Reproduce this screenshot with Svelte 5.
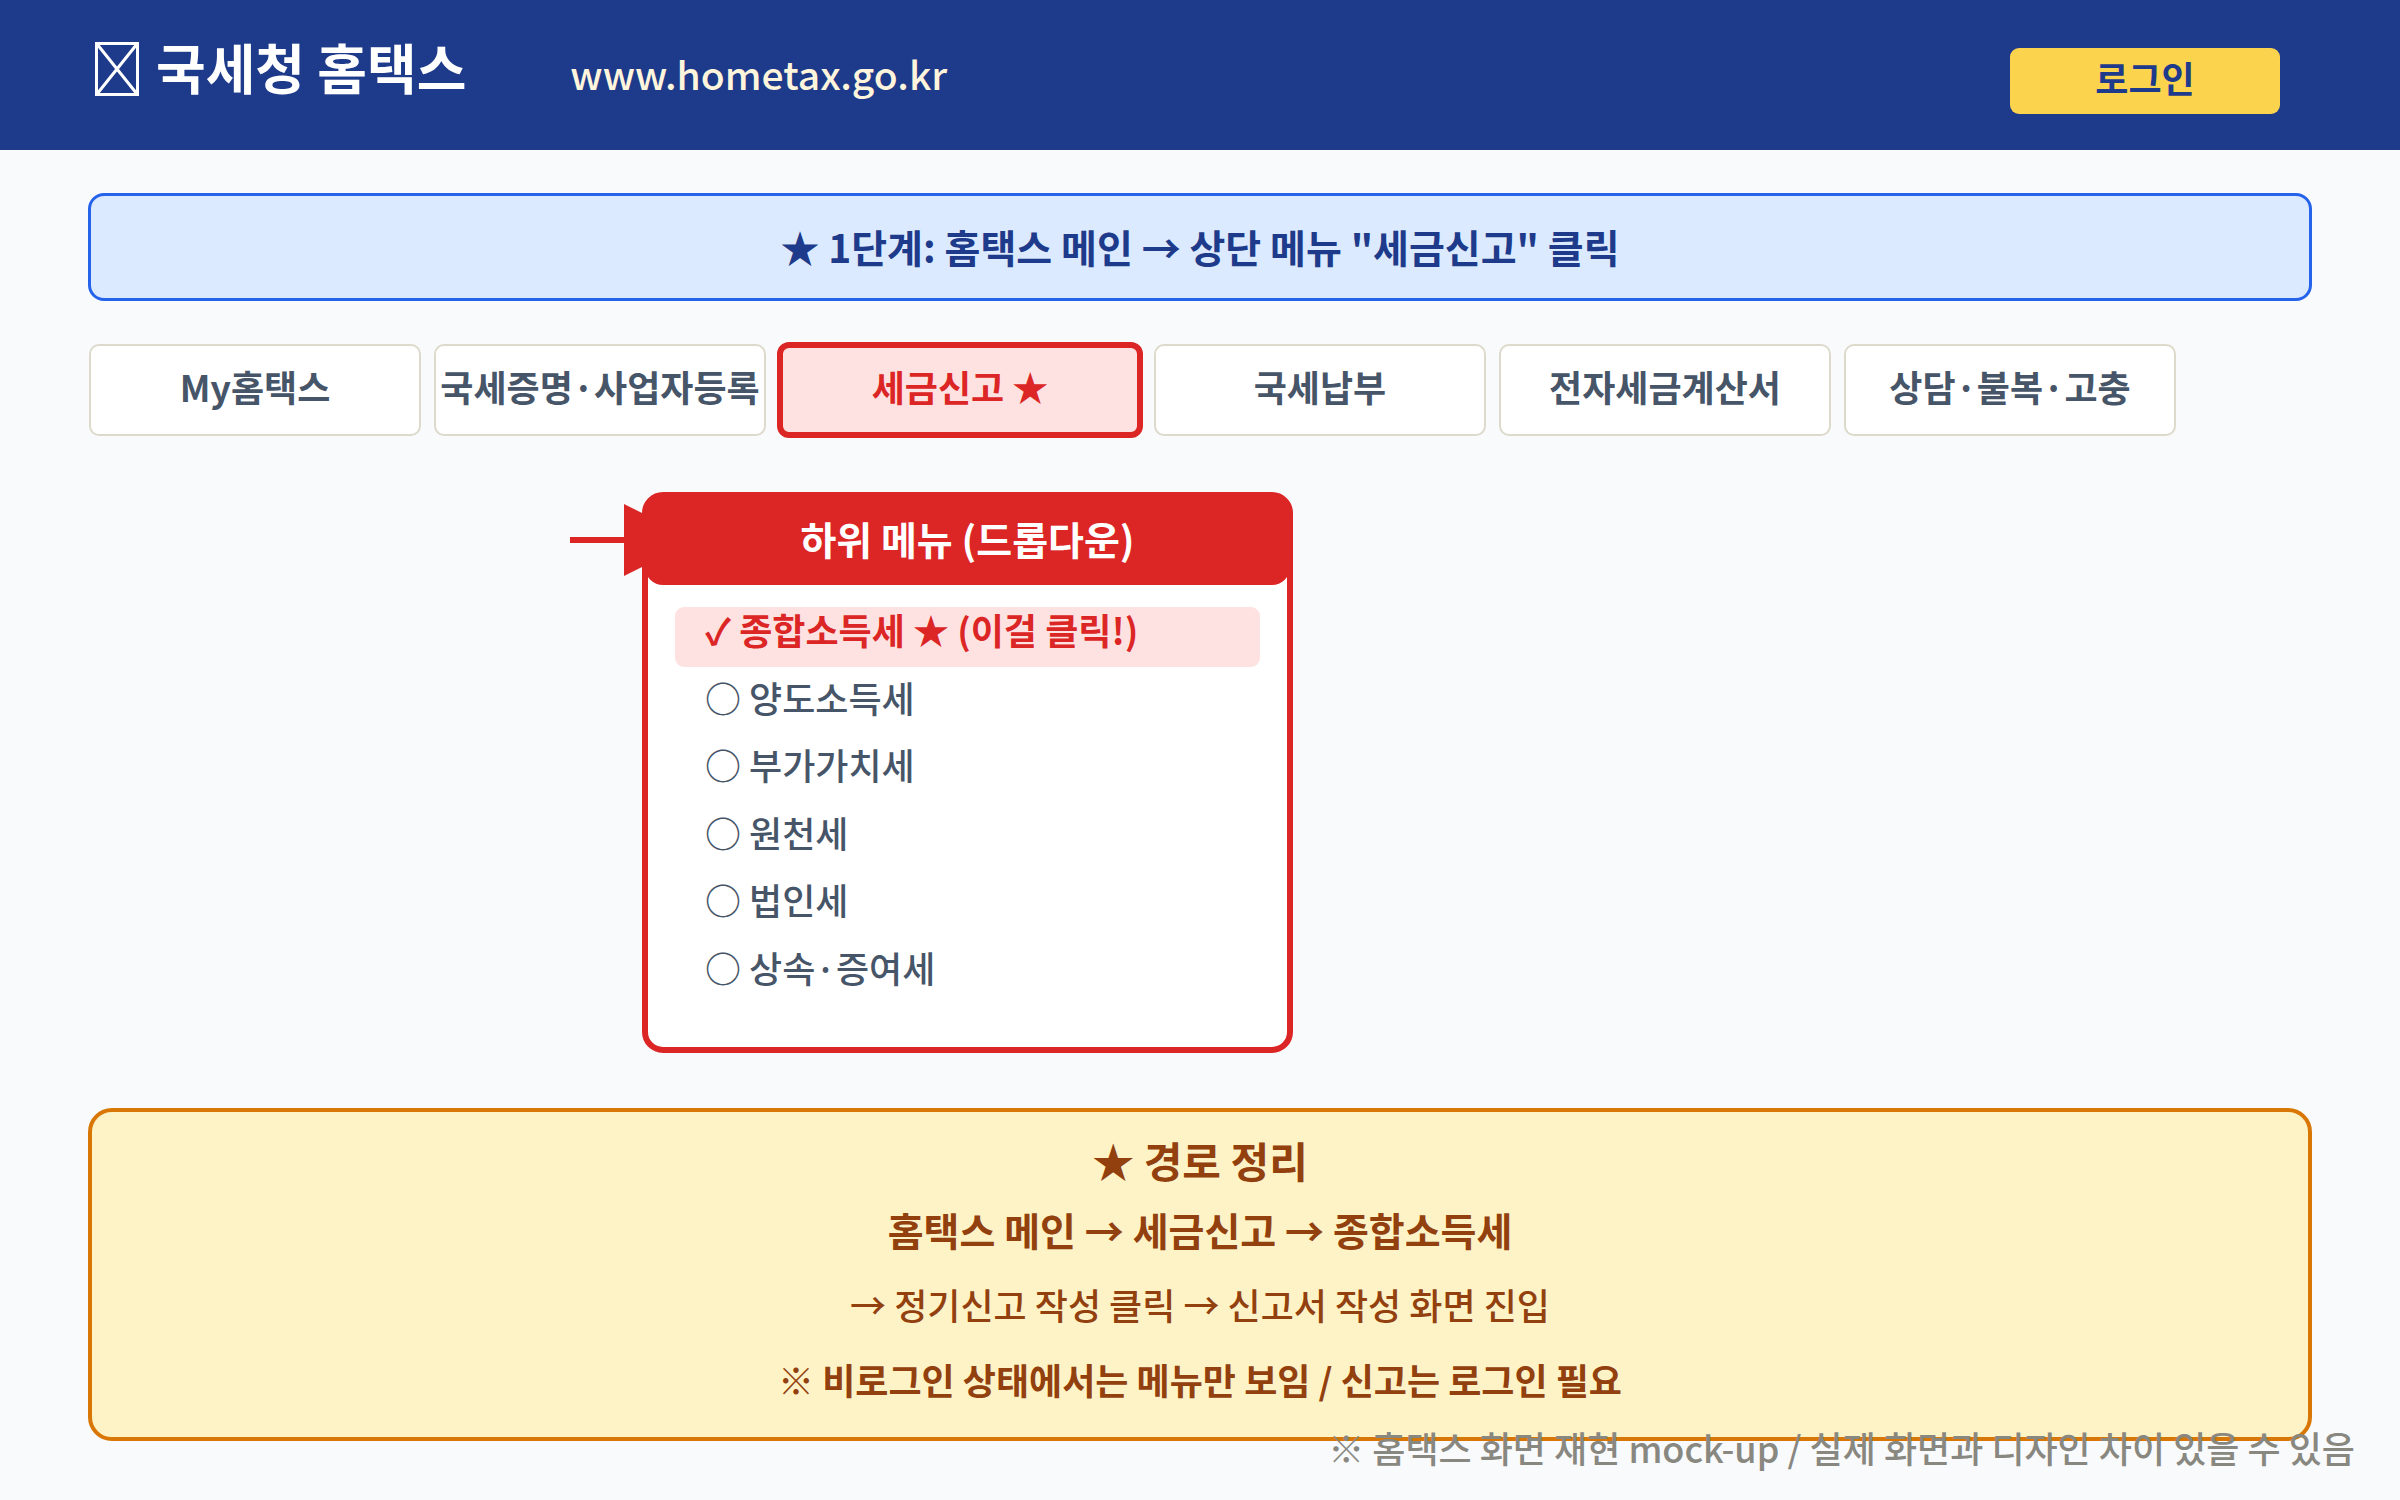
<script lang="ts">
  interface MenuEntry {
    label: string;
    active?: boolean;
  }

  const tabs: MenuEntry[] = [
    { label: "My홈택스" },
    { label: "국세증명·사업자등록" },
    { label: "세금신고 ★", active: true },
    { label: "국세납부" },
    { label: "전자세금계산서" },
    { label: "상담·불복·고충" },
  ];

  const subMenu: MenuEntry[] = [
    { label: "✓ 종합소득세 ★ (이걸 클릭!)", active: true },
    { label: "○ 양도소득세" },
    { label: "○ 부가가치세" },
    { label: "○ 원천세" },
    { label: "○ 법인세" },
    { label: "○ 상속·증여세" },
  ];
</script>

<div class="page">
  <header class="header">
    <div class="brand">
      <h1 class="title">
        <svg class="emblem" viewBox="0 0 44 54" aria-hidden="true">
          <rect x="1.5" y="1.5" width="41" height="51" />
          <path d="M2 2L42 52M42 2L2 52" />
        </svg><span>국세청 홈택스</span>
      </h1>
      <a class="url" href="#home">www.hometax.go.kr</a>
    </div>
    <button class="login" type="button">로그인</button>
  </header>

  <main class="content">
    <h2 class="step">★ 1단계: 홈택스 메인 → 상단 메뉴 "세금신고" 클릭</h2>

    <nav class="tabs">
      {#each tabs as tab}
        <button class="tab" class:active={tab.active} type="button">{tab.label}</button>
      {/each}
    </nav>

    <div class="callout">
      <svg class="arrow" viewBox="0 0 126 72" aria-hidden="true">
        <path d="M0 33H54V0L126 36L54 72V39H0Z" />
      </svg>
      <section class="dropdown">
        <h3 class="dropdown-title">하위 메뉴 (드롭다운)</h3>
        <ul class="items">
          {#each subMenu as item}
            <li>
              <a class="item" class:active={item.active} href="#menu">{item.label}</a>
            </li>
          {/each}
        </ul>
      </section>
    </div>

    <section class="summary">
      <h3>★ 경로 정리</h3>
      <p class="route">홈택스 메인 → 세금신고 → 종합소득세</p>
      <p>→ 정기신고 작성 클릭 → 신고서 작성 화면 진입</p>
      <p class="strong">※ 비로그인 상태에서는 메뉴만 보임 / 신고는 로그인 필요</p>
    </section>
  </main>

  <footer class="note">※ 홈택스 화면 재현 mock-up / 실제 화면과 디자인 차이 있을 수 있음</footer>
</div>

<style>
  :global(body) {
    background: #f9fafc;
  }

  .page {
    position: relative;
    min-height: 100vh;
    box-sizing: border-box;
    padding-bottom: 58px;
    font-family: "Noto Sans CJK KR", sans-serif;
    font-size: 36px;
    font-weight: 500;
    color: #475569;
  }

  h1,
  h2,
  h3,
  p,
  ul {
    margin: 0;
    padding: 0;
  }

  button {
    font: inherit;
    cursor: pointer;
  }

  .header {
    display: flex;
    justify-content: space-between;
    align-items: flex-start;
    box-sizing: border-box;
    height: 150px;
    padding: 27px 120px 0 95px;
    background: #1e3a8a;
  }

  .brand {
    display: flex;
    align-items: baseline;
    gap: 104px;
  }

  .title {
    color: #fff;
    font-size: 54px;
    font-weight: 700;
    line-height: 80px;
    white-space: nowrap;
  }

  .emblem {
    width: 44px;
    height: 54px;
    margin-right: 17px;
    vertical-align: -6px;
    fill: none;
    stroke: #fff;
    stroke-width: 3;
  }

  .url {
    color: #fff5dc;
    font-size: 39px;
    line-height: 56px;
    text-decoration: none;
  }

  .login {
    width: 270px;
    height: 66px;
    margin-top: 21px;
    padding: 0 0 8px;
    border: 0;
    border-radius: 9px;
    background: #fcd34d;
    color: #1e3a8a;
    font-weight: 700;
  }

  .content {
    padding: 43px 88px 0;
  }

  .step {
    padding-bottom: 2px;
    border: 3px solid #2563eb;
    border-radius: 16px;
    background: #dbeafe;
    color: #1e3a8a;
    font-size: 39px;
    font-weight: 700;
    line-height: 100px;
    text-align: center;
  }

  .tabs {
    display: flex;
    align-items: center;
    gap: 13px;
    margin: 41px 1px 0;
  }

  .tab {
    flex: 0 1 332px;
    height: 92px;
    padding: 0 0 8px;
    border: 2px solid #dddacb;
    border-radius: 10px;
    background: #fff;
    color: #475569;
    font-weight: 700;
    white-space: nowrap;
  }

  .tab.active {
    flex-basis: 366px;
    height: 96px;
    margin: 0 -2px;
    border: 6px solid #dc2626;
    border-radius: 12px;
    background: #fee2e2;
    color: #dc2626;
  }

  .callout {
    display: flex;
    align-items: flex-start;
    margin: 54px 0 0 482px;
  }

  .arrow {
    flex: none;
    width: 126px;
    height: 72px;
    margin: 12px -54px 0 0;
    fill: #dc2626;
  }

  .dropdown {
    z-index: 1;
    box-sizing: border-box;
    width: 651px;
    padding-bottom: 42px;
    border: 6px solid #dc2626;
    border-radius: 21px;
    background: #fff;
  }

  .dropdown-title {
    margin: -3px;
    padding-bottom: 4px;
    border-radius: 18px;
    background: #dc2626;
    color: #fff;
    font-size: 39px;
    font-weight: 700;
    line-height: 86px;
    text-align: center;
  }

  .items {
    display: flex;
    flex-direction: column;
    justify-content: space-between;
    height: 398px;
    margin: 25px 27px 0;
    list-style: none;
  }

  .item {
    display: block;
    height: 60px;
    padding-left: 30px;
    border-radius: 9px;
    color: #475569;
    line-height: 44px;
    text-decoration: none;
  }

  .item.active {
    background: #fee2e2;
    color: #dc2626;
    font-weight: 700;
  }

  .summary {
    margin-top: 55px;
    padding: 16px 0 20px;
    border: 4px solid #d97706;
    border-radius: 24px;
    background: #fef3c7;
    color: #92400e;
    text-align: center;
  }

  .summary h3 {
    font-size: 42px;
    font-weight: 700;
    line-height: 64px;
  }

  .summary p {
    line-height: 75px;
  }

  .summary .route {
    font-size: 39px;
    font-weight: 700;
  }

  .summary .strong {
    font-weight: 700;
  }

  /* lies over the lower edge of the summary box */
  .note {
    position: absolute;
    right: 45px;
    bottom: 27px;
    color: #888780;
    line-height: 52px;
    white-space: nowrap;
  }
</style>
